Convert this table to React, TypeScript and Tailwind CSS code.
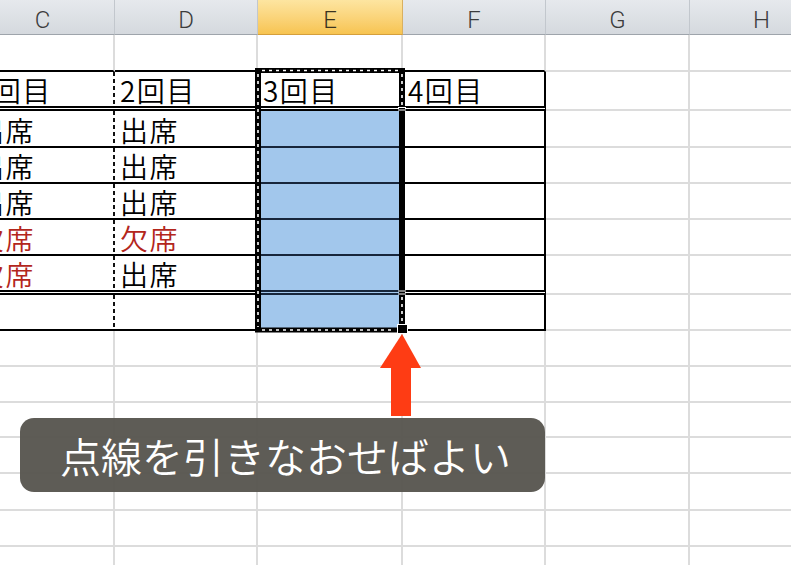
import React from "react";

const COLS = ["C", "D", "E", "F", "G", "H"];

const TEXT: Record<string, { t: string; red?: boolean }> = {
  "2-0": { t: "1回目" },
  "2-1": { t: "2回目" },
  "2-2": { t: "3回目" },
  "2-3": { t: "4回目" },
  "3-0": { t: "出席" },
  "3-1": { t: "出席" },
  "4-0": { t: "出席" },
  "4-1": { t: "出席" },
  "5-0": { t: "出席" },
  "5-1": { t: "出席" },
  "6-0": { t: "欠席", red: true },
  "6-1": { t: "欠席", red: true },
  "7-0": { t: "欠席", red: true },
  "7-1": { t: "出席" },
};

function cellClass(r: number, c: number): string {
  const parts: string[] = ["flex items-end pl-[5px] pb-[2px] whitespace-nowrap"];
  const inTable = c <= 3;
  // right border
  if (inTable && r >= 2 && r <= 8) {
    if (c === 0) {
      parts.push(
        "border-r-0 bg-no-repeat bg-right bg-[length:2px_100%] bg-[repeating-linear-gradient(to_bottom,#111_0px,#111_4px,transparent_4px,transparent_7px)]"
      );
    } else {
      parts.push("border-r-2 border-r-black");
    }
  } else {
    parts.push("border-r-2 border-r-[#dcdcdc]");
  }
  // bottom border
  const sel = c === 2 && r >= 3 && r <= 8;
  if (inTable && (r === 1 || (r >= 3 && r <= 6) || r === 8)) {
    parts.push(sel ? "border-b-2 border-b-[#17263b]" : "border-b-2 border-b-black");
  } else if (inTable && (r === 2 || r === 7)) {
    parts.push(
      sel
        ? "border-b-[5px] [border-bottom-style:double] border-b-[#17263b]"
        : "border-b-[5px] [border-bottom-style:double] border-b-black"
    );
  } else {
    parts.push("border-b-2 border-b-[#dcdcdc]");
  }
  if (sel) parts.push("bg-[#a2c7ec]");
  return parts.join(" ");
}

export default function App() {
  const rows = Array.from({ length: 15 }, (_, i) => i + 1);
  return (
    <div className="relative w-[791px] h-[565px] overflow-hidden bg-white font-['Noto_Sans_CJK_JP','Noto_Sans',sans-serif]">
      <div className="ml-[-29px] grid grid-cols-[144px_143px_145px_143px_144px_144px] grid-rows-[35px_37px_39px_37px_36px_36px_36px_39px_36px_36px_36px_35px_36px_37px_36px_36px]">
        {COLS.map((l, c) => (
          <div
            key={l}
            className={
              c === 2
                ? "flex items-center justify-center pt-[6px] bg-linear-to-b from-[#fde5a0] to-[#f7c450] border-r border-r-[#d9b060] border-b border-b-[#d59f3c] text-[#3a3320] text-[24px] font-light font-['Roboto',sans-serif]"
                : "flex items-center justify-center pt-[6px] bg-linear-to-b from-[#e6e9ed] to-[#d5d9de] border-r border-r-[#c2c7cd] border-b border-b-[#9ea4ab] text-[#3c3c3c] text-[24px] font-light font-['Roboto',sans-serif]"
            }
          >
            {l}
          </div>
        ))}
        {rows.map((r) =>
          COLS.map((_, c) => {
            const tx = TEXT[`${r}-${c}`];
            return (
              <div key={`${r}-${c}`} className={cellClass(r, c)}>
                {tx ? (
                  <span
                    className={
                      tx.red
                        ? "text-[28px] leading-none tracking-[1.5px] font-[350] text-[#b3261c]"
                        : "text-[28px] leading-none tracking-[1.5px] font-[350] text-black"
                    }
                  >
                    {tx.t}
                  </span>
                ) : null}
              </div>
            );
          })
        )}
      </div>

      <svg
        className="absolute left-0 top-0 pointer-events-none"
        width={791}
        height={565}
        viewBox="0 0 791 565"
      >
        {/* marquee left */}
        <line x1={258} y1={68} x2={258} y2={332} stroke="#000" strokeWidth={6} />
        <line x1={258} y1={74} x2={258} y2={327} stroke="#fff" strokeWidth={1.6} strokeDasharray="3 4" />
        {/* marquee top */}
        <line x1={255} y1={70.5} x2={405} y2={70.5} stroke="#000" strokeWidth={5} />
        <line x1={262} y1={70.5} x2={398} y2={70.5} stroke="#fff" strokeWidth={1.3} strokeDasharray="3 4" />
        {/* marquee bottom */}
        <line x1={255} y1={330} x2={399} y2={330} stroke="#000" strokeWidth={5} />
        <line x1={262} y1={330} x2={395} y2={330} stroke="#fff" strokeWidth={1.3} strokeDasharray="3 4" />
        {/* marquee right */}
        <line x1={402} y1={68} x2={402} y2={326} stroke="#000" strokeWidth={6} />
        <line x1={402} y1={74} x2={402} y2={105} stroke="#fff" strokeWidth={1.6} strokeDasharray="3 4" />
        <line x1={402} y1={297} x2={402} y2={322} stroke="#fff" strokeWidth={1.6} strokeDasharray="3 4" />
        <line x1={398} y1={107.5} x2={406} y2={107.5} stroke="#fff" strokeWidth={1} />
        <line x1={398} y1={110} x2={406} y2={110} stroke="#fff" strokeWidth={1} />
        <line x1={398} y1={291} x2={406} y2={291} stroke="#fff" strokeWidth={1} />
        <line x1={398} y1={294} x2={406} y2={294} stroke="#fff" strokeWidth={1} />
        {/* fill handle */}
        <rect x={397.5} y={324.5} width={10} height={9} fill="#000" stroke="#fff" strokeWidth={1} />
        {/* arrow */}
        <polygon points="402,334 380,368 421,368" fill="#fe3c14" />
        <rect x={391} y={367} width={20} height={49} fill="#fe3c14" />
      </svg>

      <div className="absolute left-[20px] top-[418px] w-[525px] h-[74px] rounded-[14px] bg-[#55534d]/95 flex items-center justify-center pl-[6px]">
        <span className="text-white text-[41px] leading-none font-[350]">点線を引きなおせばよい</span>
      </div>
    </div>
  );
}
